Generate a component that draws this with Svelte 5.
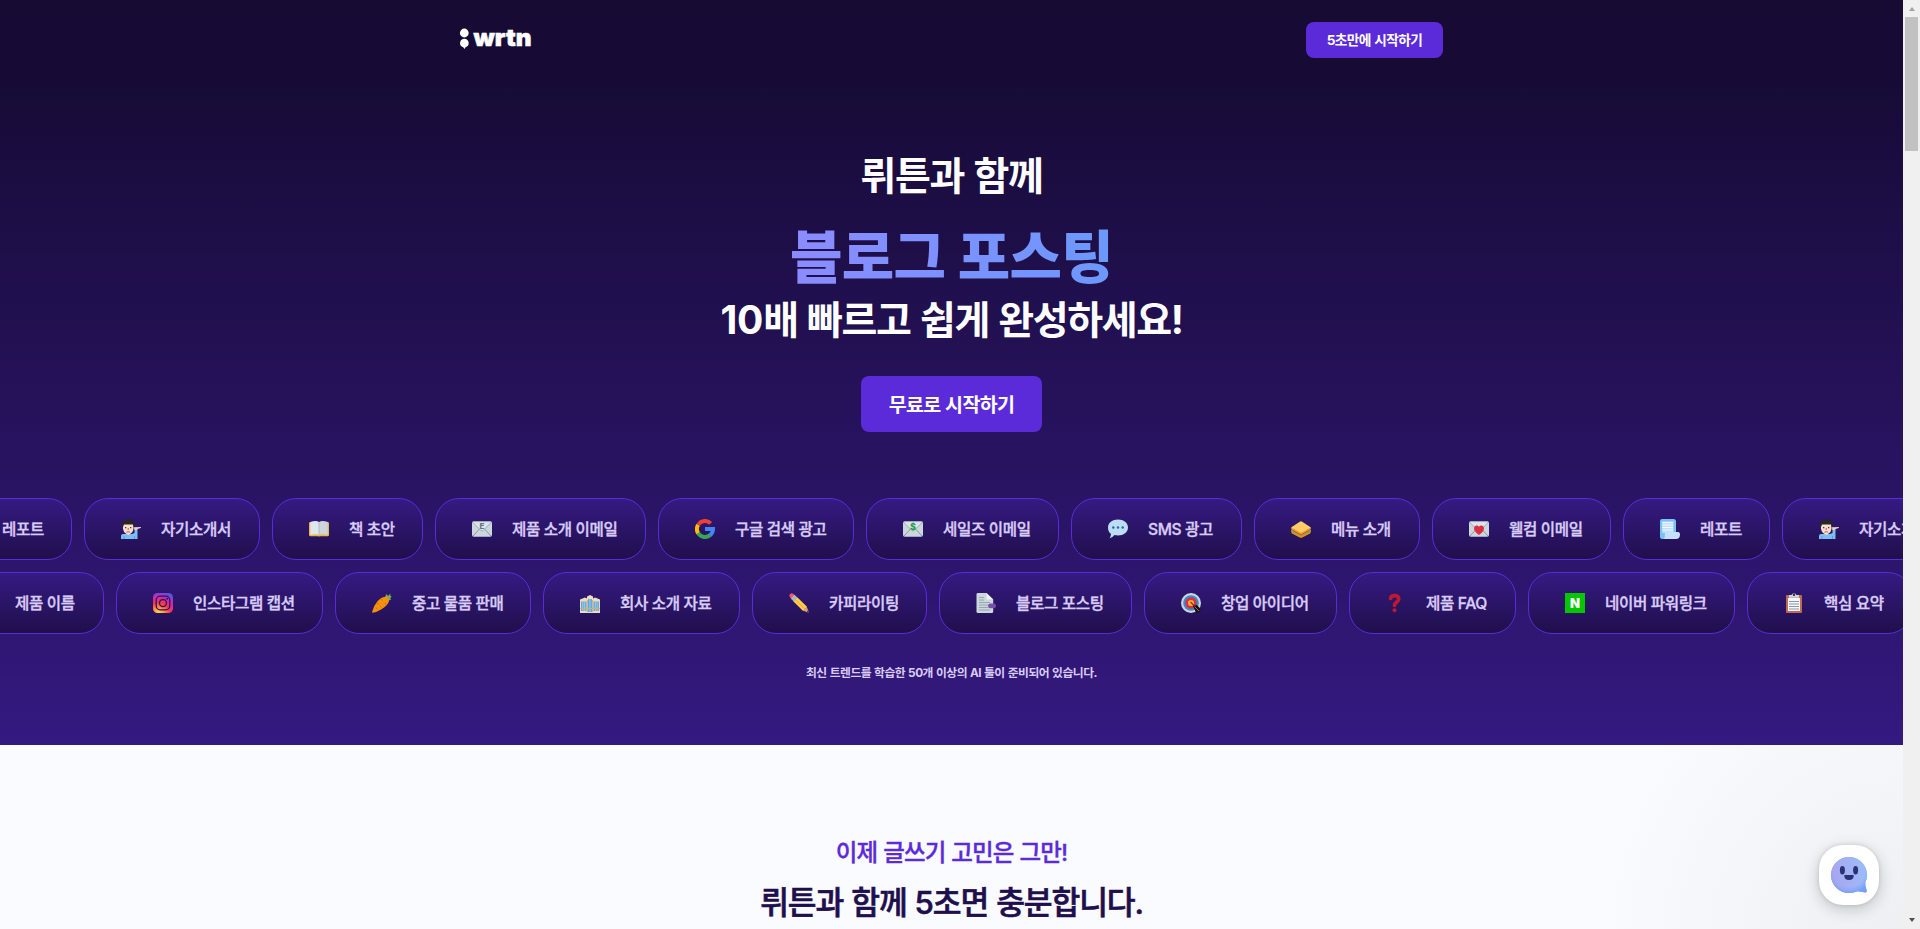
<script lang="ts">
  type Tool = { icon: string; label: string; width: number };

  const topRow: Tool[] = [
    { icon: 'scroll', label: '레포트', width: 147 },
    { icon: 'person', label: '자기소개서', width: 176 },
    { icon: 'book', label: '책 초안', width: 151 },
    { icon: 'mail-e', label: '제품 소개 이메일', width: 211 },
    { icon: 'google', label: '구글 검색 광고', width: 196 },
    { icon: 'mail-dollar', label: '세일즈 이메일', width: 193 },
    { icon: 'bubble', label: 'SMS 광고', width: 171 },
    { icon: 'sandwich', label: '메뉴 소개', width: 166 },
    { icon: 'mail-heart', label: '웰컴 이메일', width: 179 },
    { icon: 'scroll', label: '레포트', width: 147 },
    { icon: 'person', label: '자기소개서', width: 176 },
  ];

  const bottomRow: Tool[] = [
    { icon: 'page', label: '제품 이름', width: 166 },
    { icon: 'instagram', label: '인스타그램 캡션', width: 207 },
    { icon: 'carrot', label: '중고 물품 판매', width: 196 },
    { icon: 'building', label: '회사 소개 자료', width: 197 },
    { icon: 'pencil', label: '카피라이팅', width: 175 },
    { icon: 'page', label: '블로그 포스팅', width: 193 },
    { icon: 'target', label: '창업 아이디어', width: 193 },
    { icon: 'question', label: '제품 FAQ', width: 167 },
    { icon: 'naver', label: '네이버 파워링크', width: 207 },
    { icon: 'clipboard', label: '핵심 요약', width: 165 },
  ];
</script>

{#snippet toolIcon(name: string)}
  <svg class="tool-icon" viewBox="0 0 20 20" aria-hidden="true">
    {#if name === 'scroll'}
      <path fill="#7cc0f4" d="M2 0h11.5a2.5 2.5 0 0 1 2.5 2.5V16H6l-1 4H2a2 2 0 0 1-2-2V2a2 2 0 0 1 2-2z" />
      <path fill="#bfe0fb" d="M2.3 2.5h11.2V14H2.3z" />
      <path stroke="#f1f8ff" d="M2 3.5h11M2 6h11M2 8.5h11M2 11h11" />
      <path fill="#c4e0fc" d="M6.5 13H18c1.5 0 2 1.200 2 2.500 0 3-1.500 4.500-4 4.500H3.800c1.200-1.200 1-2.500 1-4 0-2 .7-3 1.700-3z" />
    {:else if name === 'person'}
      <path fill="#7dbdf2" d="M0 20v-3q0-2 2-2h9l2.500-1V8.500l3 1V20z" />
      <path fill="#5b9fdc" d="M2.500 17h1v3h-1zM13 17h1v3h-1z" />
      <path fill="#efd0b8" d="M13 8.200 20 8l-.2 1-3.300 1-1 1h-2z" />
      <path fill="#f7dece" d="M2 5.500Q2 3 7 3t5.500 2.500v4Q12 14 7.300 16 2.500 14 2 9.500z" />
      <path fill="#282529" d="M1 8V4.500Q1 1 5.500 1q1.500-1.500 4-.2 4 .2 4 4V8h-1L12 5.500H3L2 8z" />
      <path fill="#4f3432" d="M4 8h1.300v1.200H4zm5 0h1.300v1.200H9z" />
      <path stroke="#b45d51" fill="none" d="M5.500 13.200q1.800-1 3.500 0M7.200 9v2" />
    {:else if name === 'book'}
      <path fill="#eab744" d="M0 4.200Q0 3 1.500 3h17Q20 3 20 4.200V16q0 1.200-1.500 1.200H11q-1 .6-2 0H1.500Q0 17.200 0 16z" />
      <path fill="#dfe6ed" d="M1.300 3Q7 1 10 3v13q-3-1.300-8.700 0z" />
      <path fill="#ccd6dd" d="M18.700 3Q13 1 10 3v13q3-1.300 8.700 0z" />
      <path stroke="#98a8b4" stroke-width=".6" d="M10 3v13" />
    {:else if name.startsWith('mail')}
      <rect y="2.200" width="20" height="15.600" rx="1.800" fill="#ccd6dd" />
      <path d="M1 17 7.500 10M19 17l-6.500-7" stroke="#8799a5" />
      <path fill="#dde5eb" stroke="#8e9fac" stroke-width=".8" d="m.6 3.300 8.200 8.200q1.200 1 2.400 0l8.200-8.200Q19 2.600 18 2.600H2Q1 2.600.6 3.300z" />
      {#if name === 'mail-e'}
        <text x="10" y="10" text-anchor="middle" class="mark mark-e">E</text>
      {:else if name === 'mail-dollar'}
        <text x="10" y="10.600" text-anchor="middle" class="mark mark-dollar">$</text>
      {:else}
        <path fill="#dd2e44" d="M10 16C6.500 13.600 5 11.500 5 9.300 5 6 8.800 5.500 10 7.800 11.200 5.500 15 6 15 9.300 15 11.500 13.500 13.600 10 16z" />
      {/if}
    {:else if name === 'google'}
      <g fill="none" stroke-width="4">
        <path stroke="#ea4335" d="M3.400 5.500A8 8 0 0 1 15.700 4.300" />
        <path stroke="#fbbc04" d="M3.200 5.800a8 8 0 0 0 .1 8.600" />
        <path stroke="#34a853" d="M3.200 14.200a8 8 0 0 0 12 1.900" />
        <path stroke="#4285f4" d="M10 10.100h8a8 8 0 0 1-3 6.200" />
      </g>
    {:else if name === 'bubble'}
      <path fill="#bdddf4" d="M10 .5c5.500 0 10 3.200 10 8s-4.500 8-10 8q-2 0-3.500-.4-2 2.600-4.800 3.200 1.200-2 1.300-4.300C1 13.500 0 11.200 0 8.500c0-4.800 4.500-8 10-8z" />
      <g fill="#2a6797">
        <circle cx="5.300" cy="8.500" r="1.200" />
        <circle cx="10" cy="8.500" r="1.200" />
        <circle cx="14.700" cy="8.500" r="1.200" />
      </g>
    {:else if name === 'sandwich'}
      <path fill="#f4900c" d="M.5 11v3.200l8.700 4.500h1.600l8.700-4.500V11z" />
      <path fill="#77b255" d="m.2 10.500 9.800 5.800 9.800-5.800v2.300L10 17.500.2 12.800z" />
      <path fill="#dd2e44" d="m1.500 10.200 8.500 5 8.500-5v1.500l-8.500 4.500-8.500-4.500z" />
      <path fill="#f39a24" d="M.2 8.500 10 14.200l9.800-5.700v1.700L10 15.500.2 10.200z" />
      <path fill="#ffcc66" d="M.4 8.200 9.200 2.400q.8-.5 1.600 0l8.800 5.800q.3.500-.2.900L10.800 13.500q-.8.500-1.600 0L.6 9.100z" />
    {:else if name === 'instagram'}
      <rect width="20" height="20" rx="4.500" fill="url(#ig)" />
      <g fill="none" stroke="#2a1260" stroke-width="1.300">
        <rect x="3.200" y="3.200" width="13.600" height="13.600" rx="4" />
        <circle cx="10" cy="10" r="3.500" />
      </g>
      <circle cx="14.200" cy="5.800" r="1" fill="#2a1260" />
    {:else if name === 'carrot'}
      <path fill="#77b255" d="m12.500 5 2-4 1.500 2L18.500.5 18.200 3l1.600.3-1.600 1.900 1 1.300L15 8z" />
      <path fill="#f4900c" d="M14.700 3.800q2.700 1.500 2.400 4.400Q15 13 9.500 16.200 4.500 19.300.7 19.700-.2 19.300.4 18 1.500 13 5.500 8.200 10 3.500 14.700 3.800z" />
      <path stroke="#c36b08" stroke-width=".8" d="m5 10 2 1.500M9 6l1.500 1.500M4 15l1.500 1M8 13l1.500 1.500M12.500 10l1.500 1" />
    {:else if name === 'building'}
      <path fill="#efdbbd" d="M0 6.500 5 4.500l2 1V3.500L10 2l3 1.500v2l2-1 5 2V20H0z" />
      <path fill="#65a9d5" d="M1 8.500h5.500V18H1zm12.500 0H19V18h-5.500zM8 6h4v13H8z" />
      <path stroke="#b7dbef" stroke-width=".7" d="M2.800 8.500V18M4.700 8.500V18M15.300 8.500V18M17.200 8.500V18M10 6v13" />
      <path stroke="#c7ae8c" d="M0 15.500h20M7.300 7v12M12.700 7v12" />
    {:else if name === 'pencil'}
      <path fill="#d99e82" d="m14.200 17.800 5.300 2q.4-.2.300-.7l-2-5.300z" />
      <path fill="#292f33" d="m17.700 19 1.800.8q.5-.2.300-.7L19 17.300z" />
      <path fill="#ea596e" d="M.7 3.800Q-.2 2 1.200.9 2.600-.3 4.500 1l1.800 1.800-3.800 3.800z" />
      <path fill="#aab8c2" d="m2 5.500 3.500-3.700 3.200 3-3.900 4z" />
      <path fill="#ffcc4d" d="m4.500 8.500 4-4 9.500 9.300-3.900 4.200z" />
      <path stroke="#ed9e36" stroke-width=".8" d="m6.800 7 9 9" />
    {:else if name === 'page'}
      <path fill="#ccd6dd" d="M1.500 0h9L17.200 6.500v12q0 1.500-1.500 1.500H2Q.5 20 .5 18.500V1.500Q.5 0 1.500 0z" />
      <path fill="#f0f3f6" d="M10.500 0v5.200q0 1.300 1.300 1.300h5.400z" />
      <path stroke="#8799a5" stroke-width=".8" d="M3 4.500h5M3 7h5M3 9.500h11M3 12h9M3 14.500h9M3 17h11" />
      <rect x="12" y="10.500" width="8" height="4.800" rx="2.400" fill="#7450a8" />
    {:else if name === 'target'}
      <circle cx="10" cy="10" r="10" fill="#ccd6dd" />
      <circle cx="10" cy="10" r="7.800" fill="#398cca" />
      <circle cx="10" cy="10" r="5.700" fill="#dd2e44" />
      <circle cx="10" cy="10" r="3" fill="#ffac33" />
      <path stroke="#6b3a28" stroke-width="1.100" d="m9.500 9 5 5" />
      <path fill="#161216" d="m12 13 4-1 4 4.500-2 .5.500 2.500h-3.500z" />
      <path stroke="#c07a38" stroke-width=".9" d="m13.500 13.500 4.500 4.500" />
    {:else if name === 'question'}
      <path fill="none" stroke="#be1931" stroke-width="3.700" stroke-linecap="round" d="M4.600 5.500c.5-3.800 8.200-4 8.200.5 0 3.200-4.300 2.800-4.300 6.400" />
      <circle cx="8.500" cy="17.300" r="2" fill="#be1931" />
    {:else if name === 'naver'}
      <rect width="20" height="20" fill="#03c700" />
      <text x="10" y="14.800" text-anchor="middle" class="mark mark-naver">N</text>
    {:else if name === 'clipboard'}
      <rect x="2" y="2" width="16" height="18" rx="1" fill="#c1694f" />
      <path fill="#f5f8fa" d="M4 5h12v13H4z" />
      <path fill="#ccd6dd" d="M5 2h2.500Q8 .2 10 .2t2.500 1.800H15v2.700H5z" />
      <circle cx="10" cy="1.700" r="1.200" fill="#292f33" />
      <path stroke="#8799a5" d="M5 8.500h10M5 11h10M5 13.500h10M5 16h10" />
    {/if}
  </svg>
{/snippet}

{#snippet toolRow(tools: Tool[])}
  {#each tools as tool}
    <li class="tool" style="width: {tool.width}px">
      {@render toolIcon(tool.icon)}
      <span>{tool.label}</span>
    </li>
  {/each}
{/snippet}

<svg class="defs" aria-hidden="true">
  <defs>
    <radialGradient id="ig" cx=".28" cy="1.050" r="1.150">
      <stop offset="0" stop-color="#ffe078" />
      <stop offset=".25" stop-color="#ff9a3c" />
      <stop offset=".5" stop-color="#f9354c" />
      <stop offset=".75" stop-color="#c82bb4" />
      <stop offset="1" stop-color="#4b58e0" />
    </radialGradient>
    <linearGradient id="face" x1="0" y1=".6" x2="1" y2=".4">
      <stop offset="0" stop-color="#a9a5ef" />
      <stop offset="1" stop-color="#9bbcfa" />
    </linearGradient>
    <radialGradient id="rim" cx=".5" cy=".4" r=".62">
      <stop offset=".7" stop-color="#7aa5fb" stop-opacity="0" />
      <stop offset="1" stop-color="#6f9dfb" stop-opacity=".9" />
    </radialGradient>
  </defs>
</svg>

<div class="window">
  <div class="page">
    <section class="hero">
      <header>
        <svg class="logo" viewBox="0 0 74 26" role="img" aria-label="wrtn">
          <circle cx="4.300" cy="8" r="4.400" />
          <path d="M4.300 13.800a4.300 4.300 0 0 1 4.400 4.300q0 3.300-3.200 4.200L4.500 24l-1.300-1.700Q0 21.400 0 18.100a4.300 4.300 0 0 1 4.300-4.300z" />
          <text x="13.500" y="20.700" textLength="58" lengthAdjust="spacingAndGlyphs">wrtn</text>
        </svg>
        <button class="start-small">5초만에 시작하기</button>
      </header>

      <h1>
        <span class="line">뤼튼과 함께</span>
        <span class="keyword">블로그 포스팅</span>
        <span class="line last"><span class="digits">10</span>배 빠르고 쉽게 완성하세요!</span>
      </h1>
      <button class="start">무료로 시작하기</button>

      <ul class="tools top">{@render toolRow(topRow)}</ul>
      <ul class="tools bottom">{@render toolRow(bottomRow)}</ul>
      <p class="caption">최신 트렌드를 학습한 50개 이상의 AI 툴이 준비되어 있습니다.</p>
    </section>

    <section class="intro">
      <p class="eyebrow">이제 글쓰기 고민은 그만!</p>
      <h2>뤼튼과 함께 5초면 충분합니다.</h2>
    </section>

    <button class="chat" aria-label="chat">
      <svg viewBox="0 0 40 40">
        <path id="blob" fill="url(#face)" d="M20 2a18 18 0 0 1 18 18q0 3.700-1.700 7.200-.5 3.500 1.400 8.300.3 2-1.500 2-3.800-1-7.500-1.200Q24.500 38 20 38a18 18 0 0 1 0-36z" />
        <use href="#blob" />
        <path fill="url(#rim)" d="M20 2a18 18 0 0 1 18 18q0 3.700-1.700 7.200-.5 3.500 1.400 8.300.3 2-1.500 2-3.800-1-7.500-1.200Q24.500 38 20 38a18 18 0 0 1 0-36z" />
        <ellipse cx="13.400" cy="15.200" rx="2.500" ry="4.200" fill="#2b3173" />
        <ellipse cx="26.600" cy="15.200" rx="2.500" ry="4.200" fill="#2b3173" />
        <path fill="#2b3173" d="M15.300 20h9.400q.4 5-4.700 5t-4.700-5z" />
      </svg>
    </button>
  </div>

  <div class="scrollbar">
    <i class="arrow up"></i>
    <i class="thumb"></i>
    <i class="arrow down"></i>
  </div>
</div>

<style>
  :global(body) { margin: 0; overflow: hidden; }
  .defs { position: absolute; width: 0; height: 0; }
  .window {
    display: flex; height: 929px; overflow: hidden;
    font-family: Inter, "Noto Sans CJK KR", sans-serif;
  }
  .page {
    position: relative; flex: 1; min-width: 0; overflow: hidden;
    display: flex; flex-direction: column;
  }
  button { border: 0; padding: 0 0 2px; font-family: inherit; cursor: pointer; }

  .hero {
    height: 745px; flex: none; display: flex; flex-direction: column; align-items: center;
    background: linear-gradient(180deg, #170b34 0, #170b36 80px, #341980 100%);
  }
  header {
    width: 983px; height: 80px; flex: none;
    display: flex; align-items: center; justify-content: space-between;
  }
  .logo { width: 74px; height: 26px; margin-bottom: 4px; fill: #fff; overflow: visible; }
  .logo text { font: 900 23.500px Inter, sans-serif; stroke: #fff; stroke-width: 0.5; }
  .start-small {
    width: 137px; height: 36px; border-radius: 8px; background: #5b2bd9;
    color: #fff; font-size: 13.700px; font-weight: 700; letter-spacing: -0.600px; word-spacing: 0.800px;
  }

  h1 {
    margin: 68px 0 0; display: flex; flex-direction: column; align-items: center;
    color: #fff; font-weight: 700; white-space: nowrap;
  }
  .line { font-size: 39px; line-height: 56px; letter-spacing: -1.400px; word-spacing: 1.600px; }
  .digits { letter-spacing: -0.200px; }
  .keyword {
    margin-top: 12px; font-size: 57px; font-weight: 800; line-height: 84px; letter-spacing: -0.700px; word-spacing: 0.800px;
    background: linear-gradient(90deg, #8b8bff, #6c98fc);
    background-clip: text; -webkit-background-clip: text; color: transparent;
  }
  .last { margin-top: -8px; }
  .start {
    width: 181px; height: 56px; margin-top: 28px; flex: none; border-radius: 8px;
    background: #5b2bd9; color: #fff; font-size: 19.500px; font-weight: 700; letter-spacing: -0.650px; word-spacing: 0.500px;
  }

  .tools {
    list-style: none; margin: 12px 0 0; padding: 0; width: 100%;
    display: flex; gap: 12px;
  }
  .tools.top { margin-top: 66px; }
  .tools.top .tool:first-child { margin-left: -75px; }
  .tools.bottom .tool:first-child { margin-left: -62px; }
  .tool {
    flex: none; height: 62px; box-sizing: border-box; padding-left: 36px;
    display: flex; align-items: center; gap: 20px; white-space: nowrap;
    border: 1px solid #5a2bd6; border-radius: 24px;
    background: linear-gradient(180deg, #351a82, #200f4c);
    color: #d9ccf8; font-size: 15.600px; font-weight: 500; letter-spacing: -0.360px;
    -webkit-text-stroke: 0.350px #d9ccf8;
  }
  .tool span { margin-top: -3px; }
  .tool-icon { width: 20px; height: 20px; flex: none; fill: none; -webkit-text-stroke: 0; }
  .mark { font-family: Inter, sans-serif; font-weight: 800; letter-spacing: 0; }
  .mark-e { font-size: 8px; fill: #66757f; }
  .mark-dollar { font-size: 9px; fill: #1d9f45; }
  .mark-naver { font-size: 13px; font-weight: 900; fill: #fff; }

  .caption {
    margin: 29px 0 0; color: #d9ccf8; font-size: 11.800px; font-weight: 700;
    line-height: 20px; letter-spacing: -0.480px; word-spacing: 0.600px;
  }

  .intro {
    flex: 1; display: flex; flex-direction: column; align-items: center; padding-top: 90px;
    background: radial-gradient(circle 310px at 1903px 194px, #eeeff1, #fafbff);
    white-space: nowrap;
  }
  .eyebrow {
    margin: 0; color: #5b2bd9; font-size: 23.500px; font-weight: 500; line-height: 36px;
    letter-spacing: -0.900px; word-spacing: 0.600px; -webkit-text-stroke: 0.350px #5b2bd9;
  }
  h2 {
    margin: 8px 0 0; color: #200f4c; font-size: 31.300px; font-weight: 500; line-height: 48px;
    letter-spacing: -1.150px; word-spacing: 0.900px; -webkit-text-stroke: 0.600px #200f4c;
  }

  .chat {
    position: absolute; right: 24px; bottom: 24px; width: 60px; height: 60px; padding: 0;
    display: grid; place-items: center; border-radius: 24px; background: #fff;
    box-shadow: 0 4px 16px rgba(0, 0, 0, 0.2), 0 0 4px rgba(0, 0, 0, 0.12);
  }
  .chat svg { width: 40px; height: 40px; }

  .scrollbar {
    width: 17px; flex: none; display: flex; flex-direction: column; align-items: center;
    background: #f0f0f0;
  }
  .thumb { width: 13px; height: 134px; margin-top: 6px; background: #c1c1c1; }
  .arrow { width: 0; height: 0; border: solid transparent; border-width: 0 3.500px; }
  .up { margin-top: 7px; border-bottom: 4px solid #a3a3a3; }
  .down { margin: auto 0 7px; border-top: 4px solid #505050; }
</style>
